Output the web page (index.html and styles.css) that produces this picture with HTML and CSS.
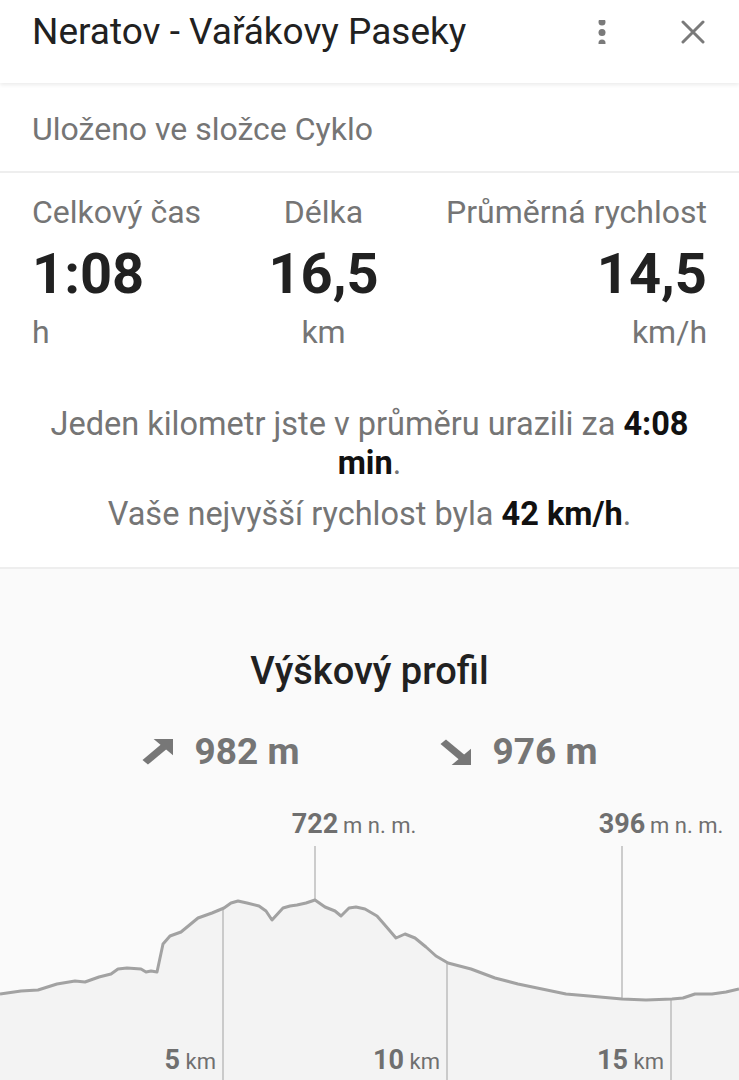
FILE: index.html
```html
<!DOCTYPE html>
<html>
<head>
    <meta charset="utf-8" />
    <title>Neratov - Vařákovy Paseky</title>
    <link rel="stylesheet" href="styles.css">
</head>
<body>
    <div class="header">
        <h1 class="title">Neratov - Vařákovy Paseky</h1>
        <div class="icon-btn">
            <svg width="24" height="24" viewBox="0 0 24 24">
                <circle cx="12" cy="2" r="3.5" fill="#7a7a7a"/>
                <circle cx="12" cy="12.5" r="3.5" fill="#7a7a7a"/>
                <circle cx="12" cy="23" r="3.5" fill="#7a7a7a"/>
            </svg>
        </div>
        <div class="icon-btn close">
            <svg width="24" height="24" viewBox="0 0 24 24">
                <path d="M2 2 L22 22 M22 2 L2 22" stroke="#7a7a7a" stroke-width="3" stroke-linecap="round"/>
            </svg>
        </div>
    </div>

    <div class="folder">Uloženo ve složce Cyklo</div>

    <div class="summary">
        <div class="stats">
            <div class="stat left">
                <div class="label">Celkový čas</div>
                <div class="value">1:08</div>
                <div class="unit">h</div>
            </div>
            <div class="stat center">
                <div class="label">Délka</div>
                <div class="value">16,5</div>
                <div class="unit">km</div>
            </div>
            <div class="stat right">
                <div class="label">Průměrná rychlost</div>
                <div class="value">14,5</div>
                <div class="unit">km/h</div>
            </div>
        </div>
        <p class="note">Jeden kilometr jste v průměru urazili za <b>4:08</b> <b>min</b>.</p>
        <p class="note second">Vaše nejvyšší rychlost byla <b>42 km/h</b>.</p>
    </div>

    <div class="profile">
        <h2>Výškový profil</h2>
        <div class="climb">
            <div class="climb-item">
                <svg width="31" height="26" viewBox="0 0 24 24" preserveAspectRatio="none">
                    <polygon points="9,0 24,0 24,15" fill="#777"/>
                    <line x1="2.5" y1="21.5" x2="17" y2="7" stroke="#777" stroke-width="6"/>
                </svg>
                <span>982 m</span>
            </div>
            <div class="climb-item">
                <svg width="31" height="26" viewBox="0 0 24 24" preserveAspectRatio="none">
                    <polygon points="24,9 24,24 9,24" fill="#777"/>
                    <line x1="2.5" y1="2.5" x2="17" y2="17" stroke="#777" stroke-width="6"/>
                </svg>
                <span>976 m</span>
            </div>
        </div>

        <svg class="chart" width="739" height="280" viewBox="0 0 739 280">
            <polygon class="area" points="0,193 21,190 38,189 57,183 75,180 85,181 99,176 111,173 118,168 127,167 141,168 146,171 151,170 157,171 163,143 170,135 181,131 198,117 212,112 224,107 231,102 238,100 247,102 259,105 266,110 272,119 283,107 290,105 297,104 306,102 315,99 325,106 335,110 341,115 349,107 356,106 365,108 377,115 384,123 396,137 405,133 415,137 426,146 436,155 448,162 471,168 495,177 518,183 542,188 566,193 589,195 622,198 646,199 672,198 683,197 695,193 712,193 726,191 739,188 739,280 0,280"/>
            <line class="mark" x1="315" y1="45" x2="315" y2="99"/>
            <line class="mark" x1="622" y1="45" x2="622" y2="198"/>
            <line class="mark" x1="223" y1="107" x2="223" y2="280"/>
            <line class="mark" x1="447" y1="162" x2="447" y2="280"/>
            <line class="mark" x1="671" y1="198" x2="671" y2="280"/>
            <polyline class="curve" points="0,193 21,190 38,189 57,183 75,180 85,181 99,176 111,173 118,168 127,167 141,168 146,171 151,170 157,171 163,143 170,135 181,131 198,117 212,112 224,107 231,102 238,100 247,102 259,105 266,110 272,119 283,107 290,105 297,104 306,102 315,99 325,106 335,110 341,115 349,107 356,106 365,108 377,115 384,123 396,137 405,133 415,137 426,146 436,155 448,162 471,168 495,177 518,183 542,188 566,193 589,195 622,198 646,199 672,198 683,197 695,193 712,193 726,191 739,188"/>

            <text class="num" x="315" y="32" text-anchor="middle">722</text>
            <text class="suffix" x="343" y="32">m n. m.</text>
            <text class="num" x="622" y="32" text-anchor="middle">396</text>
            <text class="suffix" x="650" y="32">m n. m.</text>

            <text x="216" y="268" text-anchor="end"><tspan class="num">5</tspan><tspan class="suffix"> km</tspan></text>
            <text x="440" y="268" text-anchor="end"><tspan class="num">10</tspan><tspan class="suffix"> km</tspan></text>
            <text x="664" y="268" text-anchor="end"><tspan class="num">15</tspan><tspan class="suffix"> km</tspan></text>
        </svg>
    </div>
</body>
</html>
```

FILE: styles.css
```css
body {
    margin: 0;
    font-family: Roboto, "Noto Sans", sans-serif;
    background: #fafafa;
    color: #212121;
    overflow: hidden;
}
.header {
    display: flex;
    align-items: flex-start;
    height: 83px;
    padding: 10px 34px 0 32px;
    box-sizing: border-box;
    background: white;
    box-shadow: 0 2px 4px rgba(0,0,0,0.08);
    position: relative;
}
.title {
    flex: 1;
    margin: 0;
    font-size: 37px;
    font-weight: 400;
    line-height: 44px;
    color: #212121;
}
.icon-btn {
    width: 24px;
    height: 24px;
    margin-top: 10px;
}
.close {
    margin-left: 67px;
}
.folder {
    background: white;
    padding: 26px 32px 22px;
    font-size: 32px;
    line-height: 40px;
    color: #757575;
    border-bottom: 2px solid #eeeeee;
}
.summary {
    background: white;
    padding: 19px 32px 33px;
    border-bottom: 2px solid #eeeeee;
}
.stats {
    display: flex;
    justify-content: space-between;
}
.stat.left { text-align: left; }
.stat.center { text-align: center; }
.stat.right { text-align: right; }
.label {
    font-size: 32px;
    line-height: 40px;
    color: #757575;
}
.value {
    margin-top: 10px;
    font-size: 56px;
    font-weight: 700;
    line-height: 64px;
    color: #212121;
}
.unit {
    margin-top: 6px;
    font-size: 32px;
    line-height: 40px;
    color: #757575;
}
.note {
    margin: 53px 0 0;
    text-align: center;
    font-size: 32.5px;
    line-height: 38.5px;
    color: #757575;
}
.note.second {
    margin-top: 13px;
}
.note b {
    color: #111;
    font-weight: 700;
}
.profile {
    padding-top: 80px;
}
.profile h2 {
    margin: 0;
    text-align: center;
    font-size: 38px;
    font-weight: 500;
    line-height: 44px;
    color: #212121;
}
.climb {
    display: flex;
    justify-content: center;
    gap: 140px;
    margin-top: 37px;
}
.climb-item {
    display: flex;
    align-items: center;
    gap: 22px;
    font-size: 37px;
    font-weight: 700;
    line-height: 44px;
    color: #757575;
}
.chart {
    display: block;
    margin-top: 27px;
}
.chart .area {
    fill: #f3f3f3;
}
.chart .curve {
    fill: none;
    stroke: #a2a2a2;
    stroke-width: 3;
    stroke-linejoin: round;
}
.chart .mark {
    stroke: #bdbdbd;
    stroke-width: 1.5;
}
.chart text {
    font-family: Roboto, sans-serif;
    fill: #6f6f6f;
}
.chart .num {
    font-size: 27px;
    font-weight: 700;
}
.chart .suffix {
    font-size: 22px;
    font-weight: 400;
}
```
